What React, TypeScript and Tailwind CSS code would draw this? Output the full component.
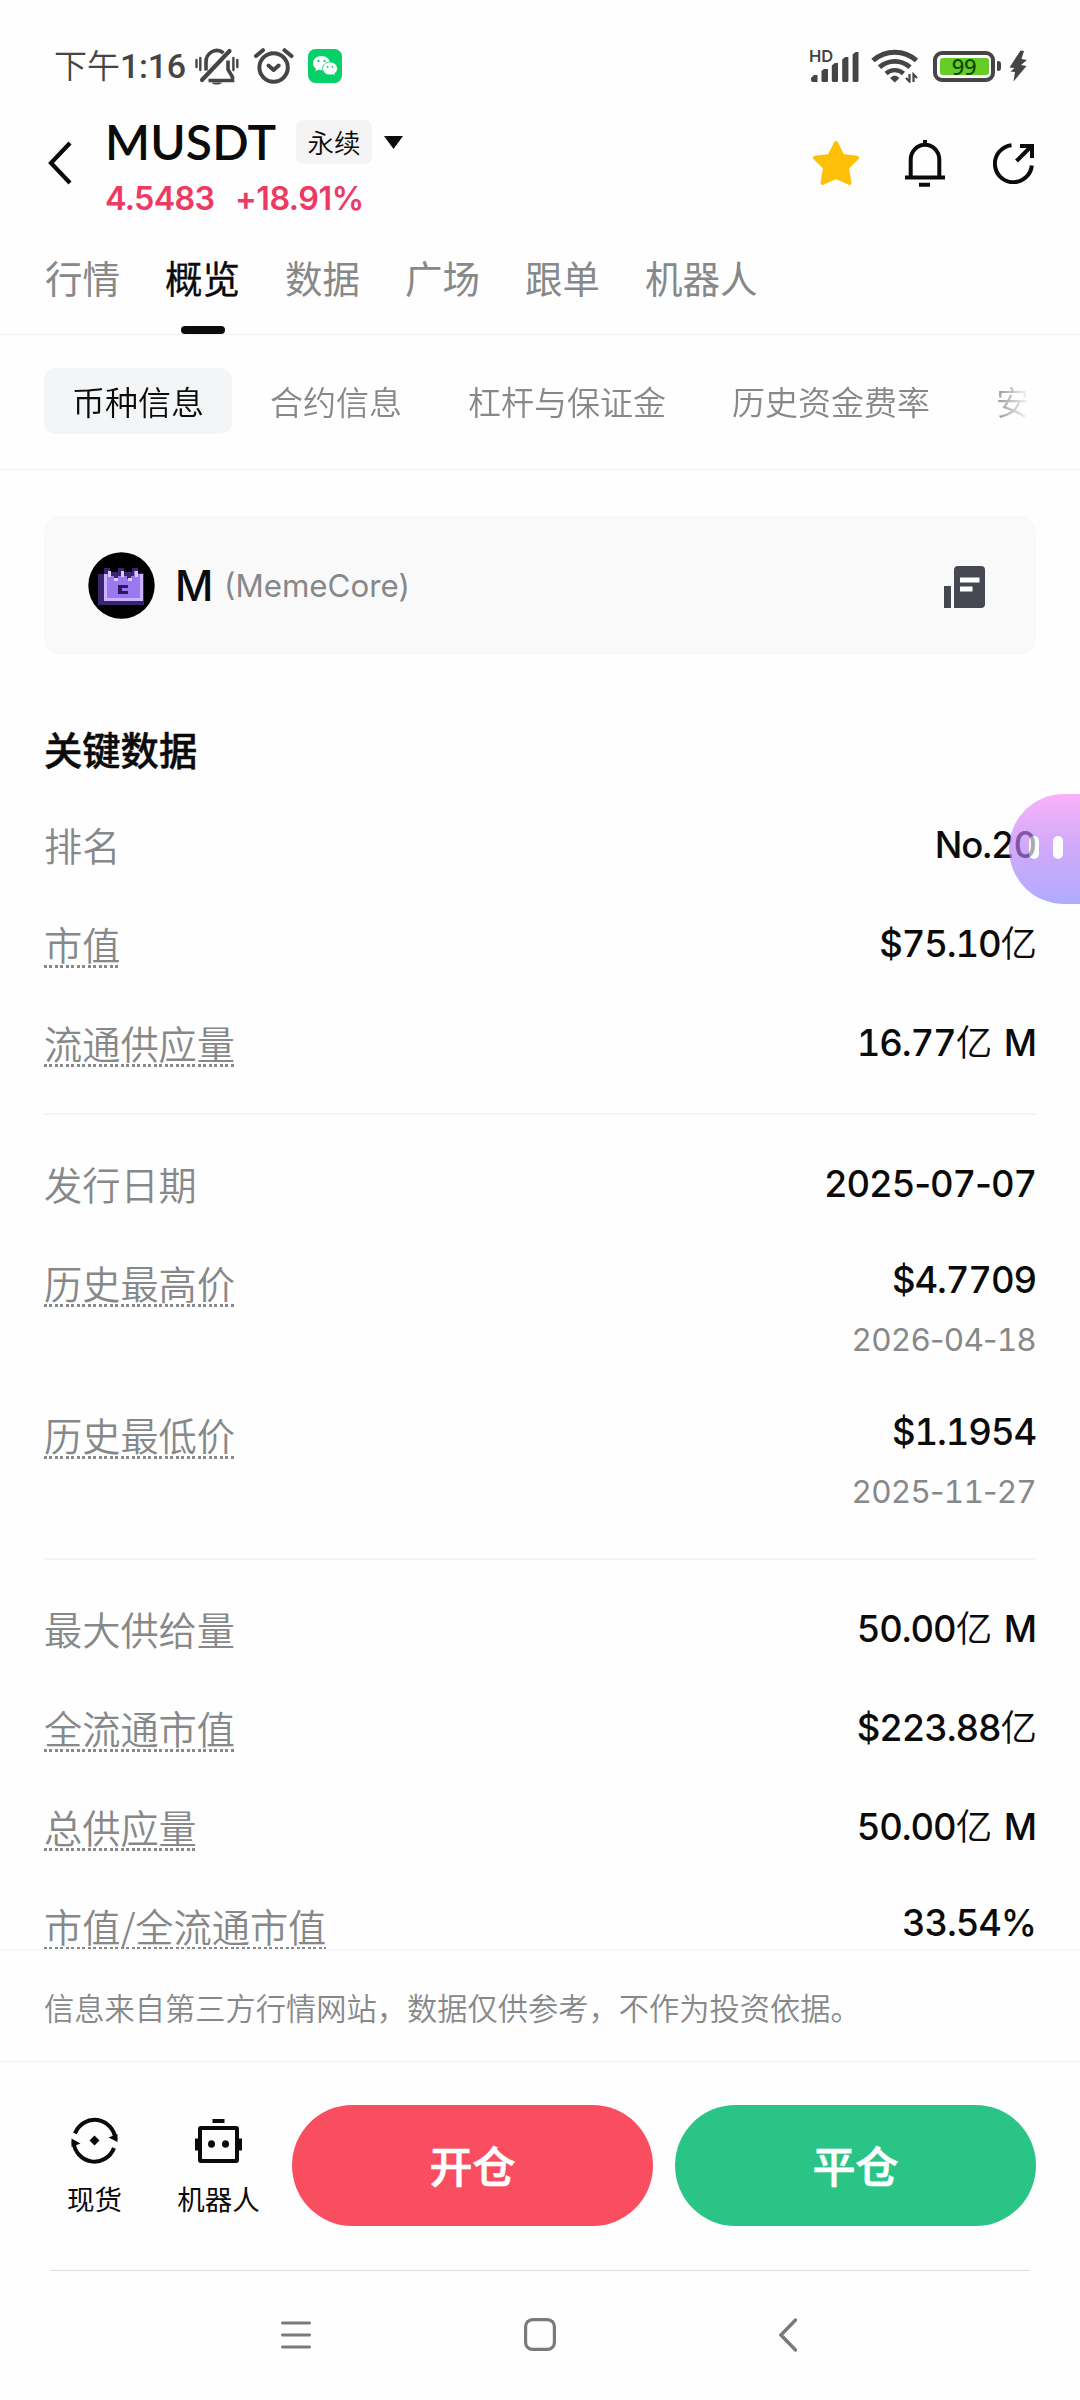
import React from "react";

const SANS = "font-['Inter','Noto_Sans_CJK_SC',sans-serif]";

function MuteIcon() {
  return (
    <svg className="h-[40px] w-[46px]" viewBox="194 46 46 40" fill="none" stroke="#454545">
      <path d="M196.5 60v7M200.3 58v12M233.4 58v12M237.3 60v7" strokeWidth="2.4" strokeLinecap="round" />
      <path d="M206 70.500v-8a10.800 11.500 0 0 1 17.500-9.500M228 60.500v9l4.500 7.500v3.500h-24" strokeWidth="3.6" />
      <path d="M202 80L229.500 51" strokeWidth="4.200" strokeLinecap="round" />
      <path d="M211.500 82.500h10.500a5.500 3 0 0 1-10.500 0z" fill="#454545" stroke="none" />
    </svg>
  );
}

function AlarmIcon() {
  return (
    <svg className="h-[38px] w-[40px]" viewBox="254 47 40 38" fill="none" stroke="#454545" strokeLinecap="round">
      <circle cx="273.600" cy="67.500" r="14.200" strokeWidth="4" />
      <path d="M256 56l7-5.800M291.500 56l-7-5.800" strokeWidth="4" />
      <path d="M268.500 65.500l5.100 4.500 5.100-4.500" strokeWidth="4" strokeLinejoin="round" />
    </svg>
  );
}

function WeChatIcon() {
  return (
    <svg className="h-[34px] w-[34px]" viewBox="0 0 34 34">
      <rect width="34" height="34" rx="7.500" fill="#06d168" />
      <path d="M13.500 7C8.800 7 5 10.200 5 14.200c0 2.200 1.200 4.200 3.100 5.500l-.8 2.600 3-1.500c1 .3 2.100.5 3.200.5 4.700 0 8.500-3.100 8.500-7.100S18.200 7 13.500 7z" fill="#fff" />
      <path d="M22 13c-4.200 0-7.500 2.900-7.500 6.500s3.300 6.500 7.500 6.500c1 0 1.900-.2 2.800-.5l2.500 1.400-.6-2.300c1.800-1.200 2.800-3 2.800-5.100 0-3.600-3.300-6.500-7.500-6.500z" fill="#fff" stroke="#06d168" strokeWidth=".8" />
      <g fill="#06b35a">
        <circle cx="10.500" cy="12" r="1.100" />
        <circle cx="16.500" cy="12" r="1.100" />
        <circle cx="19.600" cy="17.800" r=".9" />
        <circle cx="24.500" cy="17.800" r=".9" />
      </g>
    </svg>
  );
}

function SignalIcon() {
  return (
    <div className="relative h-[34px] w-[50px]">
      <span className="absolute top-0 left-0 text-[16.5px] leading-[14px] font-semibold text-[#454545]">HD</span>
      <svg className="h-[34px] w-[50px]" viewBox="809 49 50 34" fill="#454545">
        <path d="M811 78l3-3h3.500v7h-4.500q-2 0-2-2z" />
        <path d="M821.500 71l2.500-2h4v11.500q0 1.500-1.500 1.500h-3.500q-1.500 0-1.500-1.500z" />
        <path d="M831.800 65.500l3-2.500h3.200v17.500q0 1.500-1.500 1.500h-3.200q-1.500 0-1.500-1.500z" />
        <path d="M842.200 59.500l3-2.500h3.200v23.500q0 1.500-1.500 1.500h-3.200q-1.500 0-1.500-1.500z" />
        <path d="M852.600 54.500l3-2.500h2.900v28.500q0 1.500-1.500 1.500h-2.900q-1.500 0-1.500-1.500z" />
      </svg>
    </div>
  );
}

function WifiIcon() {
  return (
    <svg className="h-[34px] w-[48px]" viewBox="871 50 48 34" fill="none" stroke="#454545">
      <path d="M873 61.500a32.500 32.500 0 0 1 43.500 0" strokeWidth="5" />
      <path d="M879.500 68.300a22.500 22.500 0 0 1 30.500 0" strokeWidth="4.800" />
      <path d="M886 74.500a13 13 0 0 1 17.500 0" strokeWidth="4.400" />
      <path d="M890 79q4.800-5 9.500 0l-4.700 4.500z" fill="#454545" stroke="none" />
      <path d="M909.500 75v7.500l-3.500-3.500M913.500 83v-7.500l3.500 3.500" strokeWidth="2.200" />
    </svg>
  );
}

function BatteryIcon() {
  return (
    <div className="flex items-center">
      <div className="flex h-[31px] w-[62px] items-center justify-center rounded-[9px] border-4 border-[#454545]">
        <div className="flex h-[17px] w-[49px] items-center justify-center rounded-[3px] bg-[#66cc28] text-[22px] font-medium tracking-[-0.3px] text-[#0d4a08]">
          <span className="font-['Noto_Sans',sans-serif] leading-[17px]">99</span>
        </div>
      </div>
      <div className="ml-[2px] h-[10px] w-[4px] rounded-r-[3px] rounded-l-[1px] bg-[#454545]" />
    </div>
  );
}

function StatusBar() {
  return (
    <div className="flex h-[96px] items-center pt-[36px] pr-[53px] pl-[54px]">
      <div className="w-[140px] font-['Roboto','Noto_Sans_CJK_SC',sans-serif] text-[33px] leading-[40px] whitespace-nowrap text-[#454545]">
        <span className="font-[350]">下午</span>
        <span className="text-[34px] font-medium tracking-[-0.3px]">1:16</span>
      </div>
      <div className="flex items-center">
        <MuteIcon />
        <div className="ml-[14px] flex"><AlarmIcon /></div>
        <div className="ml-[14px] flex"><WeChatIcon /></div>
      </div>
      <div className="ml-auto flex items-center">
        <SignalIcon />
        <div className="ml-[12px] flex"><WifiIcon /></div>
        <div className="ml-[14px]"><BatteryIcon /></div>
        <svg className="ml-[8px] h-[32px] w-[18px]" viewBox="1009 51 18 32" fill="#454545">
          <path d="M1020.500 51.500l-11 17 5 .5-4 3.500 4.500.5-1.500 9.500 13-15.500-5.500-1 6-5-5.500-1 2.500-8z" />
        </svg>
      </div>
    </div>
  );
}

function Header() {
  return (
    <div className="flex h-[134px] items-center pr-[45px] pl-[48px]">
      <svg className="h-[44px] w-[24px]" viewBox="0 0 24 44" fill="none" stroke="#0b0b0b" strokeWidth="4.200">
        <path d="M22 2L3 22l19 20" />
      </svg>
      <div className="ml-[33px] pt-[14px]">
        <div className="flex h-[56px] items-center">
          <h1 className="w-[191px] font-['Lato',sans-serif] text-[48px] leading-[54px] font-semibold tracking-[0.2px] text-[#0b0b0b]">MUSDT</h1>
          <span className="flex h-[44px] w-[76px] items-center justify-center rounded-[7px] bg-[#f4f4f4] font-['Noto_Sans_CJK_SC',sans-serif] text-[26.500px] leading-[42px] font-[350] text-[#0b0b0b]">永续</span>
          <svg className="ml-[12px] h-[13px] w-[19px]" viewBox="0 0 19 13" fill="#0b0b0b">
            <path d="M0 0h19l-9.500 13z" />
          </svg>
        </div>
        <div className="flex h-[56px] items-center gap-[23px] pt-[2px] text-[32.300px] font-semibold text-[#ec3a62]">
          <span className="w-[107px] tracking-[-0.7px]">4.5483</span>
          <span className="tracking-[-0.5px]">+18.91%</span>
        </div>
      </div>
      <div className="ml-auto flex items-center">
        <svg className="h-[46px] w-[46px]" viewBox="0 0 46 46" fill="#fec006" stroke="#fec006" strokeWidth="4" strokeLinejoin="round">
          <path d="M23 3l6.500 13L44 17.800 34 27.500 36.500 43 23 37 9.500 43 12 27.500 2 17.800 16.500 16z" />
        </svg>
        <svg className="ml-[46px] h-[47px] w-[40px]" viewBox="0 0 40 47" fill="none" stroke="#0b0b0b" strokeWidth="4">
          <path d="M20 0v5M5.700 38V19.500a14.300 14.800 0 0 1 28.600 0V38M0 37.500h40M14 44.800h11" />
        </svg>
        <svg className="ml-[48px] h-[41px] w-[42px]" viewBox="0 0 42 41" fill="none" stroke="#0b0b0b" strokeWidth="4">
          <path d="M18.500 2.300a18.500 18.500 0 1 0 20.300 20.200" />
          <path d="M23.500 18L38 3.500M27 3h12v12" />
        </svg>
      </div>
    </div>
  );
}

const TABS = ["行情", "概览", "数据", "广场", "跟单", "机器人"];
const ACTIVE_TAB = "概览";

function Tabs() {
  return (
    <nav className="flex h-[105px] gap-[45px] border-b border-[#f1f1f1] pl-[45px] text-[37.500px]">
      {TABS.map((tab) => (
        <div key={tab} className="flex flex-col items-center pt-[3px]">
          <span className={tab === ACTIVE_TAB ? "leading-[93px] text-[#0b0b0b] [-webkit-text-stroke:0.300px_#0b0b0b]" : "leading-[93px] text-[#868889]"}>{tab}</span>
          {tab === ACTIVE_TAB && <span className="h-[8px] w-[44px] rounded-[4px] bg-[#0b0b0b]" />}
        </div>
      ))}
    </nav>
  );
}

const CHIPS = ["币种信息", "合约信息", "杠杆与保证金", "历史资金费率", "安"];

function Chips() {
  return (
    <div className="h-[135px] border-b border-[#f1f1f1] pt-[33px] pl-[44px]">
      <div className="flex w-[992px] gap-[10px] overflow-hidden font-['Noto_Sans_CJK_SC',sans-serif] text-[33px] leading-[66px] font-[350] [mask-image:linear-gradient(90deg,#000_95.500%,transparent_99.500%)]">
        {CHIPS.map((chip, i) => (
          <span
            key={chip}
            className={
              i === 0
                ? "shrink-0 rounded-[12px] bg-[#f4f5f6] px-[28px] text-[#0b0b0b]"
                : "shrink-0 px-[28px] text-[#868889]"
            }
          >
            {chip}
          </span>
        ))}
      </div>
    </div>
  );
}

function CoinLogo() {
  return (
    <svg className="h-[67px] w-[67px]" viewBox="0 0 67 67" shapeRendering="crispEdges">
      <circle cx="33.500" cy="33.500" r="33.200" fill="#000" shapeRendering="auto" />
      <path d="M10 22h6v-6h6v4h8v-4h6v4h8v-4h6v5h6v32H10z" fill="#3a2470" />
      <path d="M17 22h3v-3h3v5h3v3h4v-3h3v-5h3v5h3v3h4v-3h3v-5h4v3h4v27H17z" fill="#9a78ee" />
      <path d="M16 22h3v24h33V22h3v27H16z" fill="#cbb2ff" />
      <path d="M20 19h3v6h-3zM26 26h4v3h-4zM33 19h3v6h-3zM40 26h4v3h-4zM47 19h3v6h-3z" fill="#dccbff" />
      <path d="M30 33h10v3h-6v3h6v3H30z" fill="#2c1860" />
    </svg>
  );
}

function CoinCard() {
  return (
    <div className="mt-[46px] flex h-[139px] items-center rounded-[17px] bg-[#f9f9fa] pr-[51px] pl-[44px]">
      <CoinLogo />
      <span className="ml-[20px] w-[49px] text-[42px] font-medium text-[#0b0b0b]">M</span>
      <span className="pt-px text-[31.300px] text-[#868889]">(MemeCore)</span>
      <svg className="mt-[3px] ml-auto h-[42px] w-[41px]" viewBox="0 0 41 42" fill="#454850">
        <rect x="0" y="20" width="7" height="22" />
        <path d="M14 0h23q4 0 4 4v34q0 4-4 4H10V4q0-4 4-4z" />
        <path d="M16 11.500h19.500v5H16zM16 20.500h12.500v5H16z" fill="#fff" />
      </svg>
    </div>
  );
}

type RowData = { label: string; value: string; hint?: boolean; date?: string; raised?: boolean };

const SUPPLY: RowData[] = [
  { label: "排名", value: "No.20" },
  { label: "市值", value: "$75.10亿", hint: true },
  { label: "流通供应量", value: "16.77亿 M", hint: true },
];

const HISTORY: RowData[] = [
  { label: "发行日期", value: "2025-07-07" },
  { label: "历史最高价", value: "$4.7709", hint: true, date: "2026-04-18" },
  { label: "历史最低价", value: "$1.1954", hint: true, date: "2025-11-27" },
];

const VALUATION: RowData[] = [
  { label: "最大供给量", value: "50.00亿 M" },
  { label: "全流通市值", value: "$223.88亿", hint: true },
  { label: "总供应量", value: "50.00亿 M", hint: true },
  { label: "市值/全流通市值", value: "33.54%", hint: true, raised: true },
];

const HINT =
  "h-[45px] leading-[41px] bg-[repeating-linear-gradient(90deg,#868889_0_3px,transparent_3px_5.500px)] bg-[length:100%_3px] bg-bottom bg-no-repeat";

/** Digits stay tabular; hyphens keep their own width and 亿 a lighter weight. */
function Figure({ text }: { text: string }) {
  return (
    <>
      {text.split(/(-|亿)/).map((part, i) => {
        if (part === "-") return <span key={i} className="normal-nums">{part}</span>;
        if (part === "亿") return <span key={i} className="font-[350]">{part}</span>;
        return part;
      })}
    </>
  );
}

function Row({ row }: { row: RowData }) {
  return (
    <div className={row.date ? "flex h-[152px] justify-between" : "flex h-[99px] justify-between"}>
      <div className="flex h-[99px] items-center font-['Noto_Sans_CJK_SC',sans-serif] text-[38.200px] font-[350] text-[#868889]">
        <span className={row.hint ? HINT : "h-[45px] leading-[41px]"}>{row.label}</span>
      </div>
      <div className={row.date || row.raised ? "flex flex-col items-end pt-[15px] tabular-nums" : "flex flex-col items-end pt-[18px] tabular-nums"}>
        <span className="text-[36.500px] leading-[60px] font-medium tracking-[-1.1px] [word-spacing:4px] text-[#0b0b0b]"><Figure text={row.value} /></span>
        {row.date && <span className="text-[31.500px] leading-[60px] tracking-[-0.8px] text-[#868889]"><Figure text={row.date} /></span>}
      </div>
    </div>
  );
}

function Divider() {
  return <div className="mt-[19px] mb-[21px] h-[2px] bg-[#f5f5f5]" />;
}

function KeyData() {
  return (
    <section>
      <h2 className="flex h-[142px] items-center pt-[44px] font-['Noto_Sans_CJK_SC',sans-serif] text-[38.300px] leading-[45px] font-medium text-[#0b0b0b] [-webkit-text-stroke:0.500px_#0b0b0b]">关键数据</h2>
      {SUPPLY.map((r) => <Row key={r.label} row={r} />)}
      <Divider />
      {HISTORY.map((r) => <Row key={r.label} row={r} />)}
      <Divider />
      {VALUATION.map((r) => <Row key={r.label} row={r} />)}
    </section>
  );
}

function Assistant() {
  return (
    <div className="absolute top-[794px] right-0 flex h-[110px] w-[71px] items-center gap-[14px] rounded-l-[55px] bg-linear-to-b from-[#f88af9] via-[#b67df8] via-50% to-[#887fff] pl-[20px] opacity-65">
      <span className="-mt-1 h-[23px] w-[10px] rounded-full bg-white" />
      <span className="-mt-1 h-[23px] w-[10px] rounded-full bg-white" />
    </div>
  );
}

function ActionBar() {
  return (
    <div className="flex h-[209px] items-start border-t border-[#f1f1f1] pt-[43px] text-[27.500px] text-[#0b0b0b]">
      <div className="ml-[67px] flex w-[55px] flex-col items-center pt-[12px] whitespace-nowrap">
        <svg className="h-[47px] w-[47px]" viewBox="0 0 47 47" fill="none" stroke="#0b0b0b" strokeWidth="4">
          <path d="M4 16.500A21 21.500 0 0 1 44.500 22.500" />
          <path d="M43 31A21 21.500 0 0 1 2.500 24.500" />
          <path d="M46.500 17v8l-9-4.500zM.5 30v-8.500l9 5z" fill="#0b0b0b" stroke="none" />
          <path d="M23.500 18.500l5 5-5 5-5-5z" fill="#0b0b0b" stroke="none" />
        </svg>
        <span className="mt-[14px] leading-[44px]">现货</span>
      </div>
      <div className="ml-[55px] flex w-[83px] flex-col items-center pt-[12px] whitespace-nowrap">
        <svg className="h-[47px] w-[47px]" viewBox="0 0 47 47" fill="none" stroke="#0b0b0b" strokeWidth="4">
          <path d="M17.500 4h12" />
          <rect x="5" y="11" width="37" height="33" rx="1" />
          <path d="M2 21.500v12M45 21.500v12" />
          <ellipse cx="16.500" cy="27" rx="3.500" ry="3.800" fill="#0b0b0b" stroke="none" />
          <ellipse cx="30.500" cy="27" rx="3.500" ry="3.800" fill="#0b0b0b" stroke="none" />
        </svg>
        <span className="mt-[14px] leading-[44px]">机器人</span>
      </div>
      <button className="ml-[32px] h-[121px] w-[361px] rounded-full bg-[#f94d60] pb-[4px] font-['Noto_Sans_CJK_SC',sans-serif] text-[43px] leading-[60px] font-medium text-white [-webkit-text-stroke:0.700px_#fff]">开仓</button>
      <button className="ml-[22px] h-[121px] w-[361px] rounded-full bg-[#2bc487] pb-[4px] font-['Noto_Sans_CJK_SC',sans-serif] text-[43px] leading-[60px] font-medium text-white [-webkit-text-stroke:0.700px_#fff]">平仓</button>
    </div>
  );
}

function NavBar() {
  return (
    <div className="mx-[50px] flex h-[130px] items-center border-t border-[#dedede] pb-[2px]">
      <svg className="ml-[231px] h-[34px] w-[30px]" viewBox="0 0 30 34" stroke="#7a7a7a" strokeWidth="3" strokeLinecap="round">
        <path d="M1.500 5h27M1.500 17h27M1.500 29h27" />
      </svg>
      <svg className="ml-[213px] h-[33px] w-[32px]" viewBox="0 0 32 33" fill="none" stroke="#7a7a7a" strokeWidth="3.200">
        <rect x="1.600" y="1.600" width="28.800" height="29.800" rx="7" />
      </svg>
      <svg className="ml-[223px] h-[34px] w-[18px]" viewBox="0 0 18 34" fill="none" stroke="#7a7a7a" strokeWidth="3.400" strokeLinecap="round">
        <path d="M16.500 2L2 17l14.500 15" />
      </svg>
    </div>
  );
}

export default function App() {
  return (
    <div className={`${SANS} relative flex h-[2400px] w-[1080px] flex-col overflow-hidden bg-[#fefefe]`} lang="zh-CN">
      <StatusBar />
      <Header />
      <Tabs />
      <Chips />
      <main className="h-[1479px] shrink-0 px-[44px]">
        <CoinCard />
        <KeyData />
      </main>
      <p className="h-[112px] shrink-0 border-t-2 border-[#f6f6f6] pl-[44px] font-['Noto_Sans_CJK_SC',sans-serif] text-[30.250px] leading-[113px] font-[350] text-[#868889]">
        信息来自第三方行情网站，数据仅供参考，不作为投资依据。
      </p>
      <ActionBar />
      <NavBar />
      <Assistant />
    </div>
  );
}
